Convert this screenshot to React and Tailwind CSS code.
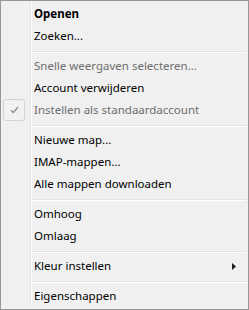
import React from 'react';

const items = [
  { label: 'Openen', bold: true },
  { label: 'Zoeken...' },
  { sep: true },
  { label: 'Snelle weergaven selecteren...', disabled: true },
  { label: 'Account verwijderen' },
  { label: 'Instellen als standaardaccount', disabled: true, checked: true },
  { sep: true },
  { label: 'Nieuwe map...' },
  { label: 'IMAP-mappen...' },
  { label: 'Alle mappen downloaden' },
  { sep: true },
  { label: 'Omhoog' },
  { label: 'Omlaag' },
  { sep: true },
  { label: 'Kleur instellen', submenu: true },
  { sep: true },
  { label: 'Eigenschappen' },
];

function Gutter({ children, h }) {
  return (
    <div className={`flex shrink-0 ${h}`}>
      <div className="w-[27px] flex items-center">{children}</div>
      <div className="w-px bg-[#e2e3e3]" />
      <div className="w-px bg-white" />
    </div>
  );
}

function CheckBox() {
  return (
    <div className="w-[22px] h-[22px] rounded-[3px] border border-[#d2d2d2] bg-[#f2f2f2] flex items-center justify-center">
      <svg width="9" height="8" viewBox="0 0 9 8">
        <path d="M1 4.2 L3.3 6.6 L8 1" fill="none" stroke="#8a8a8a" strokeWidth="1.3" />
      </svg>
    </div>
  );
}

function Row({ item }) {
  if (item.sep) {
    return (
      <div className="flex h-[8px]">
        <Gutter h="h-[8px]" />
        <div className="flex-1 pt-[4px]">
          <div className="h-px bg-[#e2e3e3]" />
          <div className="h-px bg-white" />
        </div>
      </div>
    );
  }
  return (
    <div className="flex h-[22px]">
      <Gutter h="h-[22px]">{item.checked && <CheckBox />}</Gutter>
      <div
        className={`flex-1 flex items-center justify-between pl-[2px] pr-[10px] text-[11.5px] leading-none ${
          item.disabled ? 'text-[#6d6d6d]' : 'text-black'
        } ${item.bold ? 'font-bold' : ''}`}
      >
        <span>{item.label}</span>
        {item.submenu && (
          <svg width="4" height="7" viewBox="0 0 4 7">
            <path d="M0 0 L4 3.5 L0 7 Z" fill="#1e1e1e" />
          </svg>
        )}
      </div>
    </div>
  );
}

export default function App() {
  return (
    <div
      className="w-[249px] h-[310px] border border-[#979797] bg-[#f0f0f0] p-[2px] flex flex-col"
      style={{ fontFamily: '"Noto Sans", "Open Sans", sans-serif' }}
    >
      {items.map((item, i) => (
        <Row key={i} item={item} />
      ))}
    </div>
  );
}
